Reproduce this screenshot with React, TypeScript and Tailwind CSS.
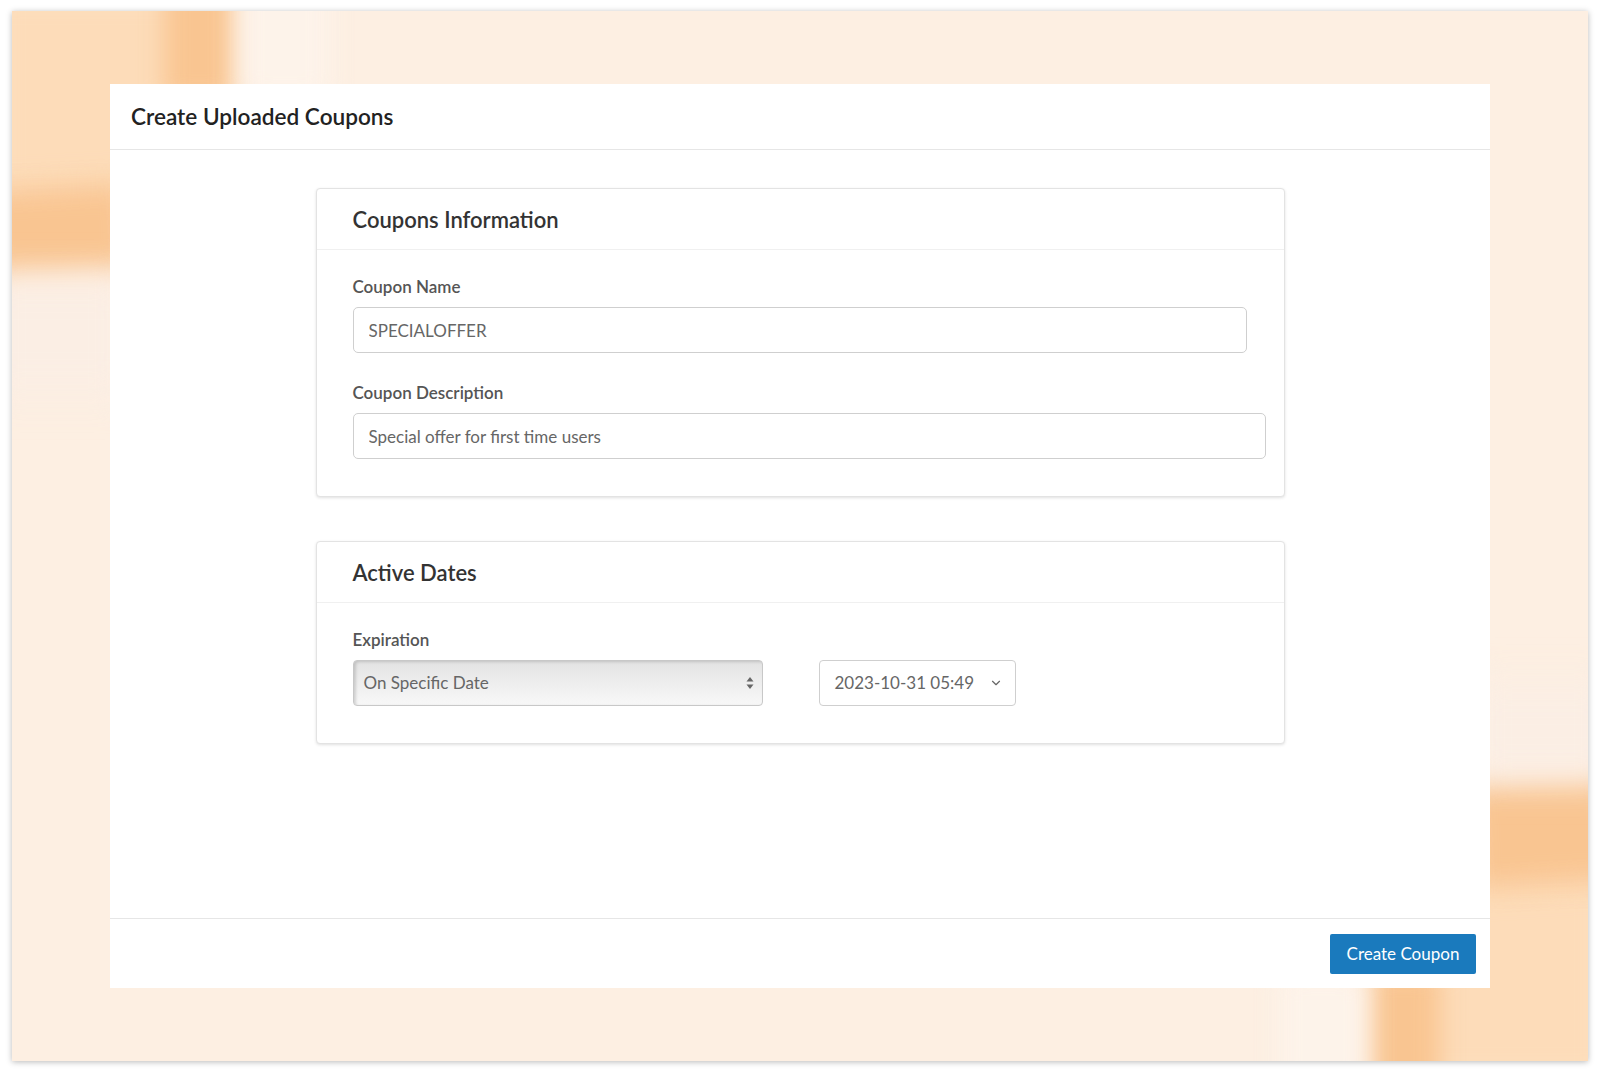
import React, { useState } from "react";
import { ChevronDown } from "lucide-react";

const font = { fontFamily: "Lato, 'Open Sans', sans-serif" };

const Section = ({ title, children }: { title: string; children: React.ReactNode }) => (
  <div className="bg-white border border-[#e3e3e3] rounded-[4px] shadow-[0_1px_3px_rgba(0,0,0,0.12)]">
    <div className="h-[61px] flex items-center px-[36px] border-b border-[#f0f0f0]">
      <h2 className="text-[22px] font-semibold text-[#333]">{title}</h2>
    </div>
    <div className="px-[36px] pt-[25px] pb-[37px]">{children}</div>
  </div>
);

const Label = ({ children }: { children: React.ReactNode }) => (
  <label className="block text-[17px] leading-[24px] font-semibold text-[#555] mb-[8px]">
    {children}
  </label>
);

const App = () => {
  const [name, setName] = useState("SPECIALOFFER");
  const [desc, setDesc] = useState("Special offer for first time users");

  return (
    <div className="min-h-screen bg-white px-[12px] pt-[11px] pb-[12px]" style={font}>
      <div className="relative overflow-hidden bg-[#fdefe2] shadow-[0_1px_6px_rgba(0,0,0,0.28)] px-[98px] py-[73px]">
        {/* background blobs */}
        <div className="absolute -left-[30px] -top-[30px] w-[250px] h-[225px] bg-[#fddcb9] blur-[18px]" />
        <div className="absolute left-[152px] -top-[30px] w-[70px] h-[120px] bg-[#f9c591] blur-[12px]" />
        <div className="absolute left-[228px] -top-[30px] w-[90px] h-[120px] bg-[#fdf3ea] blur-[14px]" />
        <div className="absolute -left-[30px] top-[175px] w-[150px] h-[90px] bg-[#f9c591] blur-[14px] -rotate-3" />
        <div className="absolute -left-[30px] top-[265px] w-[150px] h-[120px] bg-[#fbeee4] blur-[18px]" />

        <div className="absolute -right-[30px] -bottom-[30px] w-[250px] h-[225px] bg-[#fddcb9] blur-[18px]" />
        <div className="absolute right-[148px] -bottom-[30px] w-[72px] h-[120px] bg-[#f9c591] blur-[12px]" />
        <div className="absolute right-[220px] -bottom-[30px] w-[90px] h-[120px] bg-[#fdf3ea] blur-[14px]" />
        <div className="absolute -right-[30px] bottom-[175px] w-[150px] h-[110px] bg-[#f9c591] blur-[14px] -rotate-3" />
        <div className="absolute -right-[30px] bottom-[280px] w-[150px] h-[100px] bg-[#fbeee4] blur-[18px]" />

        <div className="relative bg-white h-[904px] flex flex-col">
          <div className="h-[66px] flex items-center px-[21px] border-b border-[#e6e6e6] shrink-0">
            <h1 className="text-[22.6px] font-semibold text-[#222]">Create Uploaded Coupons</h1>
          </div>

          <div className="flex-1 pt-[38px]">
            <div className="w-[969px] mx-auto flex flex-col gap-[44px]">
              <Section title="Coupons Information">
                <Label>Coupon Name</Label>
                <input
                  value={name}
                  onChange={(e) => setName(e.target.value)}
                  className="block w-[894px] h-[46px] px-[15px] border border-[#cfcfcf] rounded-[5px] text-[17px] text-[#666] outline-none"
                />
                <div className="h-[28px]" />
                <Label>Coupon Description</Label>
                <input
                  value={desc}
                  onChange={(e) => setDesc(e.target.value)}
                  className="block w-[913px] h-[46px] px-[15px] border border-[#cfcfcf] rounded-[5px] text-[17px] text-[#666] outline-none"
                />
              </Section>

              <Section title="Active Dates">
                <Label>Expiration</Label>
                <div className="flex items-center gap-[56px]">
                  <div className="w-[410px] h-[46px] flex items-center justify-between pl-[10px] pr-[8px] rounded-[4px] border border-[#c8c8c8] bg-gradient-to-b from-[#e3e3e3] to-[#f8f8f8] shadow-[inset_2px_1px_3px_rgba(0,0,0,0.15)]">
                    <span className="text-[17px] text-[#666]">On Specific Date</span>
                    <svg width="8" height="14" viewBox="0 0 8 14" className="fill-[#666]">
                      <path d="M4 1 L7.5 5.5 H0.5 Z" />
                      <path d="M4 13 L7.5 8.5 H0.5 Z" />
                    </svg>
                  </div>
                  <div className="w-[197px] h-[46px] flex items-center justify-between pl-[15px] pr-[12px] border border-[#cfcfcf] rounded-[4px]">
                    <span className="text-[17px] text-[#666]">2023-10-31 05:49</span>
                    <ChevronDown className="w-[14px] h-[14px] text-[#666]" strokeWidth={2} />
                  </div>
                </div>
              </Section>
            </div>
          </div>

          <div className="h-[70px] shrink-0 border-t border-[#e6e6e6] flex items-center justify-end pr-[14px]">
            <button className="w-[146px] h-[40px] bg-[#1a7abd] text-white text-[17px] rounded-[2px]">
              Create Coupon
            </button>
          </div>
        </div>
      </div>
    </div>
  );
};

export default App;
